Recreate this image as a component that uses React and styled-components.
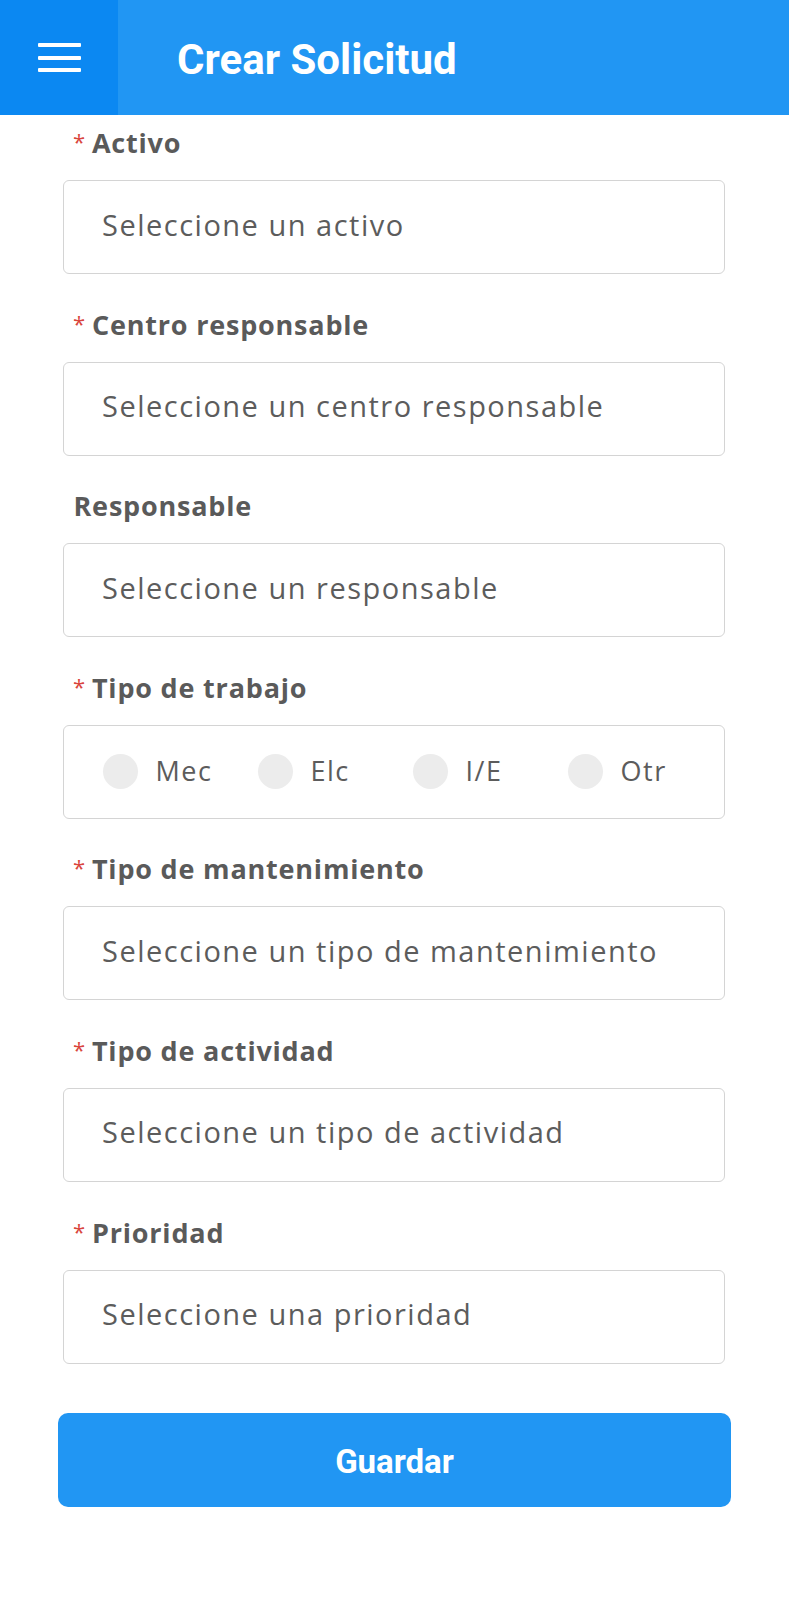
import React from "react";
import styled, { createGlobalStyle } from "styled-components";

const Global = createGlobalStyle`
  html, body { margin: 0; padding: 0; background: #fff; }
  body { font-family: "Open Sans", "Noto Sans", sans-serif; }
  * { box-sizing: border-box; }
`;

const Page = styled.div`
  width: 789px;
  min-height: 1600px;
  background: #fff;
`;

const Header = styled.header`
  height: 115px;
  display: flex;
  align-items: stretch;
  background: #2196f3;
`;

const MenuButton = styled.div`
  width: 118px;
  background: #0b88f2;
  display: flex;
  flex-direction: column;
  align-items: flex-start;
  padding: 43px 0 0 38px;
  gap: 8.5px;
`;

const MenuLine = styled.span`
  display: block;
  width: 43px;
  height: 4px;
  border-radius: 1px;
  background: #fff;
`;

const Title = styled.h1`
  margin: 0;
  padding: 4px 0 0 59px;
  display: flex;
  align-items: center;
  font-family: Roboto, "Liberation Sans", sans-serif;
  font-weight: 700;
  font-size: 42px;
  color: #fff;
`;

const Form = styled.div`
  padding: 8px 64px 0 63px;
  display: flex;
  flex-direction: column;
`;

const Field = styled.div`
  display: flex;
  flex-direction: column;
  margin-bottom: 30.6px;
`;

const Label = styled.div`
  height: 40px;
  line-height: 40px;
  padding-left: ${(p) => (p.$required ? "10px" : "10.5px")};
  margin-bottom: 17px;
  font-family: "Open Sans", "Noto Sans", sans-serif;
  font-weight: 700;
  font-size: 27px;
  color: #5a5a5a;
  letter-spacing: 0.8px;
`;

const Star = styled.span`
  color: #d9453d;
  font-weight: 400;
  font-size: 22px;
  margin-right: 6px;
  position: relative;
  top: -3px;
`;

const Box = styled.div`
  height: 94px;
  border: 1.5px solid #d4d4d4;
  border-radius: 6px;
  display: flex;
  align-items: center;
  padding: 0 0 6px 38px;
  font-family: "Open Sans", "Noto Sans", sans-serif;
  font-size: 29px;
  letter-spacing: 1.5px;
  color: #5c5c5c;
`;

const RadioBox = styled.div`
  height: 94px;
  border: 1.5px solid #d4d4d4;
  border-radius: 6px;
  display: grid;
  grid-template-columns: repeat(4, 155px);
  align-items: center;
  padding: 0 0 0 38.5px;
`;

const RadioItem = styled.label`
  display: flex;
  align-items: center;
  gap: 18px;
  font-family: "Open Sans", "Noto Sans", sans-serif;
  font-size: 27px;
  letter-spacing: 1.5px;
  color: #5c5c5c;
  padding-bottom: 2px;
`;

const Dot = styled.span`
  flex: none;
  width: 35px;
  height: 35px;
  border-radius: 50%;
  background: #ececec;
  margin-top: 2px;
`;

const SaveButton = styled.button`
  margin: 19px 58px 0 58px;
  width: 673px;
  height: 94px;
  border: none;
  border-radius: 10px;
  background: #2196f3;
  color: #fff;
  font-family: Roboto, "Liberation Sans", sans-serif;
  font-weight: 700;
  font-size: 33px;
  padding-top: 4px;
  cursor: pointer;
`;

const fields = [
  { label: "Activo", required: true, placeholder: "Seleccione un activo" },
  { label: "Centro responsable", required: true, placeholder: "Seleccione un centro responsable" },
  { label: "Responsable", required: false, placeholder: "Seleccione un responsable" },
  { label: "Tipo de trabajo", required: true, radio: ["Mec", "Elc", "I/E", "Otr"] },
  { label: "Tipo de mantenimiento", required: true, placeholder: "Seleccione un tipo de mantenimiento" },
  { label: "Tipo de actividad", required: true, placeholder: "Seleccione un tipo de actividad" },
  { label: "Prioridad", required: true, placeholder: "Seleccione una prioridad" },
];

export default function App() {
  return (
    <Page>
      <Global />
      <Header>
        <MenuButton>
          <MenuLine />
          <MenuLine />
          <MenuLine />
        </MenuButton>
        <Title>Crear Solicitud</Title>
      </Header>
      <Form>
        {fields.map((f) => (
          <Field key={f.label}>
            <Label $required={f.required}>
              {f.required && <Star>*</Star>}
              {f.label}
            </Label>
            {f.radio ? (
              <RadioBox>
                {f.radio.map((r) => (
                  <RadioItem key={r}>
                    <Dot />
                    {r}
                  </RadioItem>
                ))}
              </RadioBox>
            ) : (
              <Box>{f.placeholder}</Box>
            )}
          </Field>
        ))}
      </Form>
      <SaveButton>Guardar</SaveButton>
    </Page>
  );
}
